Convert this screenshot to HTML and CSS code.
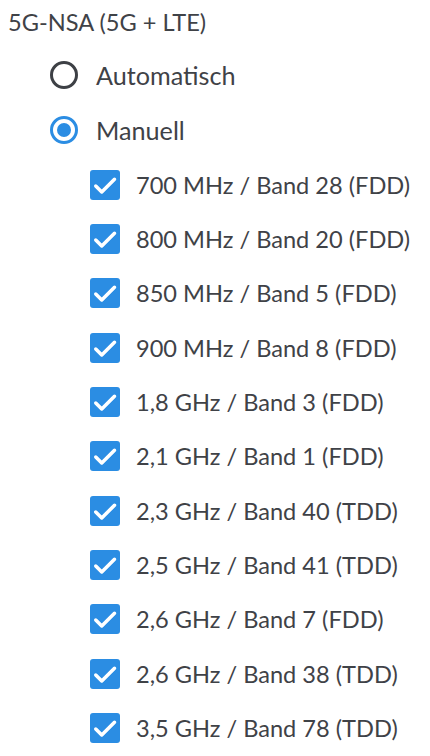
FILE: index.html
```html
<!DOCTYPE html>
<html lang="de">
<head>
<meta charset="utf-8">
<title>5G-NSA</title>
<link rel="stylesheet" href="styles.css">
</head>
<body>
<div class="form">
  <div class="title">5G-NSA (5G + LTE)</div>
  <div class="radios">
    <div class="radio-row"><span class="radio"></span><span class="label">Automatisch</span></div>
    <div class="radio-row"><span class="radio checked"></span><span class="label">Manuell</span></div>
  </div>
  <ul class="bands">
    <li class="band"><svg class="box" viewBox="0 0 24 24"><polyline points="4.6,12.8 9.4,17.6 19.6,7.4"/></svg><span class="label">700 MHz / Band 28 (FDD)</span></li>
    <li class="band"><svg class="box" viewBox="0 0 24 24"><polyline points="4.6,12.8 9.4,17.6 19.6,7.4"/></svg><span class="label">800 MHz / Band 20 (FDD)</span></li>
    <li class="band"><svg class="box" viewBox="0 0 24 24"><polyline points="4.6,12.8 9.4,17.6 19.6,7.4"/></svg><span class="label">850 MHz / Band 5 (FDD)</span></li>
    <li class="band"><svg class="box" viewBox="0 0 24 24"><polyline points="4.6,12.8 9.4,17.6 19.6,7.4"/></svg><span class="label">900 MHz / Band 8 (FDD)</span></li>
    <li class="band"><svg class="box" viewBox="0 0 24 24"><polyline points="4.6,12.8 9.4,17.6 19.6,7.4"/></svg><span class="label">1,8 GHz / Band 3 (FDD)</span></li>
    <li class="band"><svg class="box" viewBox="0 0 24 24"><polyline points="4.6,12.8 9.4,17.6 19.6,7.4"/></svg><span class="label">2,1 GHz / Band 1 (FDD)</span></li>
    <li class="band"><svg class="box" viewBox="0 0 24 24"><polyline points="4.6,12.8 9.4,17.6 19.6,7.4"/></svg><span class="label">2,3 GHz / Band 40 (TDD)</span></li>
    <li class="band"><svg class="box" viewBox="0 0 24 24"><polyline points="4.6,12.8 9.4,17.6 19.6,7.4"/></svg><span class="label">2,5 GHz / Band 41 (TDD)</span></li>
    <li class="band"><svg class="box" viewBox="0 0 24 24"><polyline points="4.6,12.8 9.4,17.6 19.6,7.4"/></svg><span class="label">2,6 GHz / Band 7 (FDD)</span></li>
    <li class="band"><svg class="box" viewBox="0 0 24 24"><polyline points="4.6,12.8 9.4,17.6 19.6,7.4"/></svg><span class="label">2,6 GHz / Band 38 (TDD)</span></li>
    <li class="band"><svg class="box" viewBox="0 0 24 24"><polyline points="4.6,12.8 9.4,17.6 19.6,7.4"/></svg><span class="label">3,5 GHz / Band 78 (TDD)</span></li>
  </ul>
</div>
</body>
</html>
```
FILE: styles.css
```css
html, body {
  margin: 0;
  padding: 0;
  background: #ffffff;
}
body {
  font-family: Lato, "Liberation Sans", sans-serif;
  font-size: 23.6px;
  color: #3f4247;
}
.form {
  padding-left: 8px;
}
.title {
  height: 47.5px;
  line-height: 44px;
  white-space: nowrap;
}
.radios {
  display: flex;
  flex-direction: column;
}
.radio-row {
  height: 55px;
  display: flex;
  align-items: center;
  gap: 18px;
  padding-left: 42px;
  font-size: 25.2px;
}
.radio {
  box-sizing: border-box;
  width: 28px;
  height: 28px;
  border: 3px solid #3d4045;
  border-radius: 50%;
  display: flex;
  align-items: center;
  justify-content: center;
  flex: none;
}
.radio.checked {
  border-color: #2b8de3;
}
.radio.checked::after {
  content: "";
  width: 14px;
  height: 14px;
  border-radius: 50%;
  background: #2b8de3;
}
.bands {
  list-style: none;
  margin: 0;
  padding: 0;
}
.band {
  height: 54.35px;
  display: flex;
  align-items: center;
  gap: 16px;
  padding-left: 82px;
  white-space: nowrap;
}
.box {
  width: 30px;
  height: 30px;
  flex: none;
  background: #2b8de3;
  border-radius: 3px;
}
.box polyline {
  fill: none;
  stroke: #ffffff;
  stroke-width: 2.8;
  stroke-linecap: round;
  stroke-linejoin: round;
}
```
